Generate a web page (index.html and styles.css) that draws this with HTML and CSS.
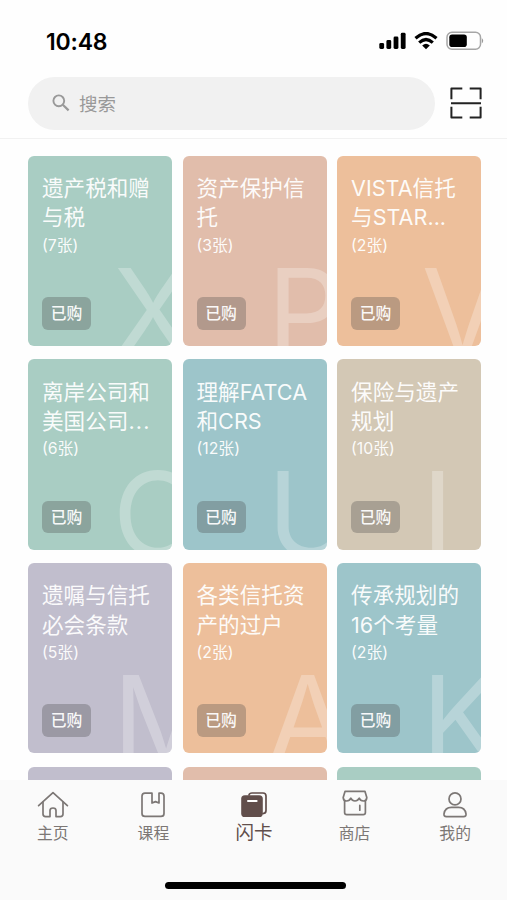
FILE: index.html
```html
<!DOCTYPE html>
<html lang="zh-CN">
<head>
    <meta charset="UTF-8">
    <meta name="viewport" content="width=device-width, initial-scale=1.0">
    <title>闪卡</title>
    <link rel="stylesheet" href="styles.css">
</head>
<body>
<div class="app">
    <div class="status">
        <span class="time">10:48</span>
        <div class="status-icons">
            <svg width="28" height="18" viewBox="0 0 28 18">
                <rect x="0.3" y="11" width="4.8" height="6" rx="1.4"/>
                <rect x="7.4" y="8" width="4.8" height="9" rx="1.4"/>
                <rect x="14.6" y="4.6" width="4.8" height="12.4" rx="1.4"/>
                <rect x="21.8" y="0.8" width="4.8" height="16.2" rx="1.4"/>
            </svg>
            <svg class="wifi" width="24" height="18" viewBox="0 0 24 18">
                <path d="M1.5 6.2 Q12 -3.2 22.5 6.2 M5.2 10.6 Q12 4.4 18.8 10.6" fill="none" stroke="#000" stroke-width="3.2"/>
                <path d="M8.2 13.4 Q12 10 15.8 13.4 L12 17.2 Z"/>
            </svg>
            <svg class="battery" width="38" height="20" viewBox="0 0 38 20">
                <rect x="1" y="1.3" width="33.5" height="17" rx="5" fill="none" stroke="#a6a6a6" stroke-width="1.5"/>
                <rect x="3.3" y="3.5" width="17.5" height="12.6" rx="2.8"/>
                <path d="M35.8 7 Q38.6 9.8 35.8 12.6 Z" fill="#999"/>
            </svg>
        </div>
    </div>

    <div class="header">
        <div class="search">
            <svg width="18" height="18" viewBox="0 0 18 18" fill="none" stroke="#999" stroke-width="1.9">
                <circle cx="6.8" cy="6.8" r="5.4"/>
                <path d="M10.8 10.8 L16.6 16.4" stroke-width="2.2"/>
            </svg>
            <span>搜索</span>
        </div>
        <svg class="scan" width="32" height="32" viewBox="0 0 32 32" fill="none" stroke="#222" stroke-width="2" stroke-linejoin="round">
            <path d="M1.4 12.3 V1.4 H12.3 M19.7 1.4 H30.6 V12.3 M1.4 19.7 V30.4 H12.3 M19.7 30.4 H30.6 V19.7 M1 16.2 H31"/>
        </svg>
    </div>

    <div class="cards">
        <div class="card green">
            <h2>遗产税和赠<br>与税</h2>
            <p>(7张)</p>
            <span class="tag">已购</span>
            <span class="letter">X</span>
        </div>
        <div class="card pink">
            <h2>资产保护信<br>托</h2>
            <p>(3张)</p>
            <span class="tag">已购</span>
            <span class="letter">P</span>
        </div>
        <div class="card orange">
            <h2>VISTA信托<br>与STAR...</h2>
            <p>(2张)</p>
            <span class="tag">已购</span>
            <span class="letter">V</span>
        </div>
        <div class="card green">
            <h2>离岸公司和<br>美国公司<span class="dots">...</span></h2>
            <p>(6张)</p>
            <span class="tag">已购</span>
            <span class="letter">O</span>
        </div>
        <div class="card blue">
            <h2>理解FATCA<br>和CRS</h2>
            <p>(12张)</p>
            <span class="tag">已购</span>
            <span class="letter">U</span>
        </div>
        <div class="card sand">
            <h2>保险与遗产<br>规划</h2>
            <p>(10张)</p>
            <span class="tag">已购</span>
            <span class="letter">I</span>
        </div>
        <div class="card purple">
            <h2>遗嘱与信托<br>必会条款</h2>
            <p>(5张)</p>
            <span class="tag">已购</span>
            <span class="letter">M</span>
        </div>
        <div class="card orange">
            <h2>各类信托资<br>产的过户</h2>
            <p>(2张)</p>
            <span class="tag">已购</span>
            <span class="letter">A</span>
        </div>
        <div class="card blue">
            <h2>传承规划的<br>16个考量</h2>
            <p>(2张)</p>
            <span class="tag">已购</span>
            <span class="letter">K</span>
        </div>
        <div class="card purple"></div>
        <div class="card pink"></div>
        <div class="card green"></div>
    </div>

    <div class="tabbar">
        <div class="tabs">
            <div class="tab">
                <svg width="32" height="28" viewBox="0 0 32 28">
                    <path d="M1.6 14.6 L16 1.6 L30.4 14.6"/>
                    <path d="M6 11 V23 Q6 25.6 8.6 25.6 H13 V19.5 Q13 17 16 17 Q19 17 19 19.5 V25.6 H23.4 Q26 25.6 26 23 V11"/>
                </svg>
                <span>主页</span>
            </div>
            <div class="tab">
                <svg width="32" height="28" viewBox="0 0 32 28">
                    <path d="M15 2.2 H8 Q5 2.2 5 5.2 V22.4 Q5 25.4 8 25.4 H24 Q27 25.4 27 22.4 V5.2 Q27 2.2 24 2.2 H22 V12 L18.5 10.6 L15 12 Z"/>
                </svg>
                <span>课程</span>
            </div>
            <div class="tab active">
                <svg width="32" height="28" viewBox="0 0 32 28">
                    <path d="M11 4 Q11.4 2 14 2 H25 Q28 2 28 5 V19.6 Q28 22.6 25 22.6"/>
                    <rect x="3.2" y="4.2" width="21.6" height="21.8" rx="3.6" fill="#614e4b" stroke="none"/>
                    <path d="M10 9.9 H18.6" stroke="#fff" stroke-width="2"/>
                </svg>
                <span>闪卡</span>
            </div>
            <div class="tab shop">
                <svg width="32" height="28" viewBox="0 0 32 28">
                    <path d="M6 2.4 H26 L27.8 8.6 Q27.6 12 24.4 12 Q21.4 12 20.2 9.2 Q18.8 12 16 12 Q13.2 12 11.8 9.2 Q10.6 12 7.6 12 Q4.4 12 4.2 8.6 Z"/>
                    <path d="M5.6 11.6 V23.4 Q5.6 25.6 7.8 25.6 H24.2 Q26.4 25.6 26.4 23.4 V11.6 M20.8 16.4 V21.2"/>
                </svg>
                <span>商店</span>
            </div>
            <div class="tab">
                <svg width="32" height="28" viewBox="0 0 32 28">
                    <circle cx="16" cy="7.9" r="6"/>
                    <path d="M7.4 25.6 H24.6 Q27.4 25.6 27 22.8 Q26 16.4 19.6 16.4 H12.4 Q6 16.4 5 22.8 Q4.6 25.6 7.4 25.6 Z"/>
                </svg>
                <span>我的</span>
            </div>
        </div>
        <div class="home-bar"></div>
    </div>
</div>
</body>
</html>
```

FILE: styles.css
```css
* {
    box-sizing: border-box;
    margin: 0;
    padding: 0;
}

body {
    background: #fefefe;
    font-family: Inter, "Noto Sans CJK SC", sans-serif;
}

.app {
    height: 900px;
    overflow: hidden;
    display: flex;
    flex-direction: column;
}

/* status bar */
.status {
    height: 77px;
    flex: none;
    padding: 5px 23px 0 46px;
    display: flex;
    align-items: center;
    justify-content: space-between;
}

.time {
    font-size: 23px;
    font-weight: 600;
    letter-spacing: -0.2px;
    padding-top: 1px;
}

.status-icons {
    display: flex;
    align-items: center;
}

.wifi {
    margin-left: 7px;
}

.battery {
    margin-left: 8px;
}

/* search */
.header {
    height: 62px;
    flex: none;
    padding: 0 25px 9px 28px;
    display: flex;
    align-items: center;
    justify-content: space-between;
    border-bottom: 1.5px solid #f1f1f1;
}

.search {
    width: 407px;
    height: 53px;
    border-radius: 27px;
    background: #f1f1f1;
    padding-left: 24px;
    display: flex;
    align-items: center;
    gap: 9px;
    color: #999;
    font-size: 18.5px;
}

/* cards */
.cards {
    flex: 1;
    min-height: 0;
    overflow: hidden;
    padding: 16.5px 25.7px 0 28.2px;
    display: grid;
    grid-template-columns: repeat(3, 1fr);
    grid-auto-rows: 190.5px;
    column-gap: 10.5px;
    row-gap: 13.2px;
}

.card {
    position: relative;
    overflow: hidden;
    border-radius: 6px;
    padding: 18.5px 0 16.5px 13.8px;
    display: flex;
    flex-direction: column;
    align-items: flex-start;
    color: rgba(255, 255, 255, 0.95);
    white-space: nowrap;
}

.card h2 {
    font-size: 21.6px;
    font-weight: 400;
    line-height: 29.3px;
}

.dots {
    letter-spacing: 1.2px;
}

.card p {
    font-size: 15.8px;
    line-height: 25px;
}

.tag {
    margin-top: auto;
    width: 49px;
    height: 32.5px;
    line-height: 34px;
    border-radius: 6px;
    background: rgba(70, 70, 70, 0.3);
    font-size: 15.8px;
    font-weight: 500;
    text-align: center;
}

.letter {
    position: absolute;
    left: 84.5px;
    top: 96px;
    font-family: Inter, sans-serif;
    font-size: 118px;
    line-height: 118px;
    color: rgba(255, 255, 255, 0.27);
}

.green { background: #a9cdc3; }
.pink { background: #e1bdab; }
.orange { background: #edbf9b; }
.blue { background: #9dc5ca; }
.sand { background: #d3c8b5; }
.purple { background: #c1becd; }

/* bottom tabs */
.tabbar {
    height: 120.5px;
    flex: none;
    background: #fafafa;
    display: flex;
    flex-direction: column;
    align-items: center;
    justify-content: space-between;
    padding: 0 0 11px 3px;
}

.tabs {
    width: 100%;
    padding: 11px 1px 0 0;
    margin-left: -1px;
    display: flex;
}

.tab {
    flex: 1;
    display: flex;
    flex-direction: column;
    align-items: center;
    color: #7c7775;
    font-size: 15.8px;
    line-height: 24px;
}

.tab svg {
    fill: none;
    stroke: #7c7775;
    stroke-width: 1.7;
    stroke-linejoin: round;
    stroke-linecap: round;
    margin-bottom: 3px;
}

.active {
    color: #614e4b;
    font-size: 18.5px;
}

.active svg {
    stroke: #614e4b;
    margin-bottom: 1px;
}

.shop svg {
    margin-top: -2px;
    margin-bottom: 5px;
}

.home-bar {
    width: 181px;
    height: 7px;
    border-radius: 4px;
    background: #000;
}
```
